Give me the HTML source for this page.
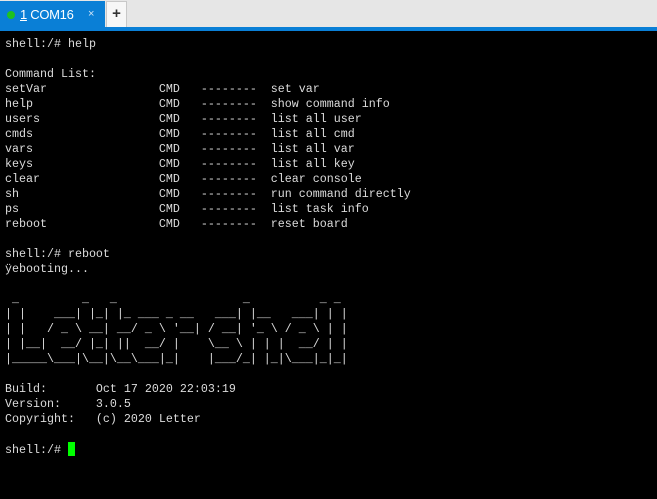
<!DOCTYPE html>
<html><head><meta charset="utf-8"><style>
html,body{margin:0;padding:0;width:657px;height:499px;overflow:hidden;background:#000}
#bar{position:absolute;left:0;top:0;width:657px;height:27px;background:#e6e6e6}
#strip{position:absolute;left:0;top:27px;width:657px;height:4px;background:#0a7fd6}
#tab{position:absolute;left:0;top:1px;width:105px;height:30px;background:#0a7fd6;color:#fff;font:13px "Liberation Sans",sans-serif}
#dot{position:absolute;left:7px;top:10px;width:8px;height:8px;border-radius:50%;background:#1fc21f}
#lbl{position:absolute;left:20px;top:6px;font-weight:normal;letter-spacing:-0.3px}
#x{position:absolute;left:88px;top:7px;font-size:11px;color:#cfe4f7}
#plus{position:absolute;left:106px;top:1px;width:21px;height:26px;background:#f7f7f7;border:1px solid #c8c8c8;border-bottom:none;box-sizing:border-box;text-align:center;font:bold 15px/24px "Liberation Sans",sans-serif;color:#333}
#term{position:absolute;left:5px;top:37px;margin:0;color:#dcdcdc;font:11.67px/15px "Liberation Mono",monospace;white-space:pre}
.c{display:inline-block;width:7px;height:14px;background:#00ff00;vertical-align:-3px}
</style></head><body>
<div id="bar"></div><div id="strip"></div>
<div id="tab"><div id="dot"></div><div id="lbl"><u>1</u> COM16</div><div id="x">×</div></div>
<div id="plus">+</div>
<pre id="term">shell:/# help

Command List:
setVar                CMD   --------  set var
help                  CMD   --------  show command info
users                 CMD   --------  list all user
cmds                  CMD   --------  list all cmd
vars                  CMD   --------  list all var
keys                  CMD   --------  list all key
clear                 CMD   --------  clear console
sh                    CMD   --------  run command directly
ps                    CMD   --------  list task info
reboot                CMD   --------  reset board

shell:/# reboot
ÿebooting...

 _         _   _                  _          _ _
| |    ___| |_| |_ ___ _ __   ___| |__   ___| | |
| |   / _ \ __| __/ _ \ '__| / __| '_ \ / _ \ | |
| |__|  __/ |_| ||  __/ |    \__ \ | | |  __/ | |
|_____\___|\__|\__\___|_|    |___/_| |_|\___|_|_|

Build:       Oct 17 2020 22:03:19
Version:     3.0.5
Copyright:   (c) 2020 Letter

shell:/# <span class="c"></span></pre>
</body></html>
